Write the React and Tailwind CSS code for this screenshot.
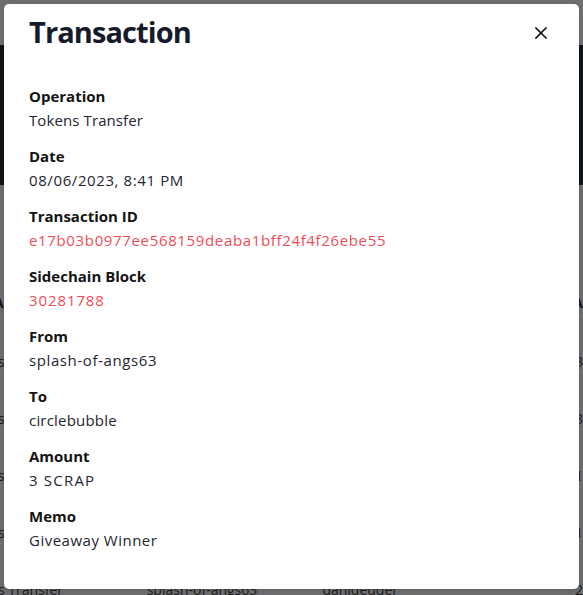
import React from "react";

const rows = [
  ["Tokens Transfer", "splash-of-angs63", "circlebubble", "3"],
  ["Tokens Transfer", "splash-of-angs63", "danideuder", "3"],
  ["Tokens Transfer", "splash-of-angs63", "danideuder", "1"],
  ["Tokens Transfer", "splash-of-angs63", "danideuder", "1"],
  ["Tokens Transfer", "splash-of-angs63", "danideuder", "2"],
  ["Tokens Transfer", "splash-of-angsb3", "danideuder", "3"],
];

const fields = [
  ["Operation", "Tokens Transfer", "text-[#1f2533] tracking-[0.1px]"],
  ["Date", "08/06/2023, 8:41 PM", "text-[#1f2533] tracking-[0.6px]"],
  ["Transaction ID", "e17b03b0977ee568159deaba1bff24f4f26ebe55", "text-[#ee4d58] tracking-[0.65px]"],
  ["Sidechain Block", "30281788", "text-[#ee4d58] tracking-[0.9px]"],
  ["From", "splash-of-angs63", "text-[#1f2533] tracking-[0.6px]"],
  ["To", "circlebubble", "text-[#1f2533] tracking-[0.2px]"],
  ["Amount", "3 SCRAP", "text-[#1f2533] tracking-[1.2px]"],
  ["Memo", "Giveaway Winner", "text-[#1f2533] tracking-[0.5px]"],
];

export default function App() {
  return (
    <div
      className="relative w-[583px] h-[595px] overflow-hidden bg-[#6c6c6f]"
      style={{ fontFamily: '"Open Sans", "Noto Sans", sans-serif' }}
    >
      {/* background page (dimmed) */}
      <div className="h-[45px] bg-[#6e6e71]" />
      <div className="h-[140px] bg-[#0f1418]" />
      <div className="h-[105px] bg-[#6c6c6f]" />
      <div className="h-[25px] flex items-center text-[14px] font-bold text-[#141414] ml-[-6px]">
        <span className="w-[586px]">A</span>
        <span>A</span>
      </div>
      {rows.map((r, i) => (
        <div
          key={i}
          className="h-[57px] border-t border-[#767679] flex items-start pt-[35px] text-[14px] text-[#1a1a1a] ml-[-42px]"
        >
          <span className="w-[189px] whitespace-nowrap">{r[0]}</span>
          <span className="w-[176px] whitespace-nowrap">{r[1]}</span>
          <span className="w-[253px] whitespace-nowrap">{r[2]}</span>
          <span>{r[3]}</span>
        </div>
      ))}

      {/* modal */}
      <div className="absolute left-[4px] top-[4px] w-[575px] h-[585px] bg-white rounded-[5px] shadow-sm">
        <div className="flex items-center justify-between pt-[10px] pl-[25px] pr-[32px]">
          <h1 className="text-[29px] leading-[36px] font-bold text-[#161b2b] tracking-[-0.9px]">
            Transaction
          </h1>
          <svg width="12" height="12" viewBox="0 0 12 12" className="mt-[1px]">
            <path d="M1 1L11 11M11 1L1 11" stroke="#111" strokeWidth="1.6" strokeLinecap="square" />
          </svg>
        </div>
        <div className="pt-[34px] pl-[25px]">
          {fields.map(([label, value, cls]) => (
            <div key={label} className="mb-[12px]">
              <div className="text-[15px] leading-[24px] font-bold text-[#141414]">{label}</div>
              <div className={"text-[15px] leading-[24px] " + cls}>{value}</div>
            </div>
          ))}
        </div>
      </div>
    </div>
  );
}
